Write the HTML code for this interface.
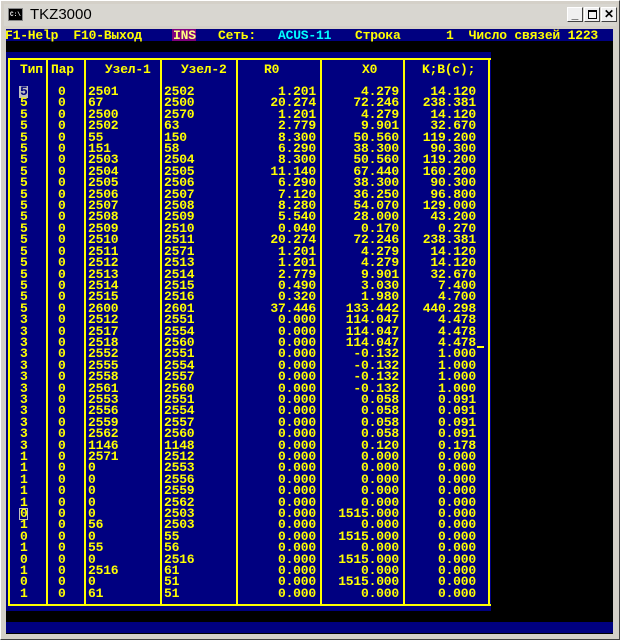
<!DOCTYPE html>
<html><head><meta charset="utf-8"><style>
*{margin:0;padding:0;box-sizing:border-box}
body{width:620px;height:640px;background:#d4d0c8;position:relative;overflow:hidden;font-family:"Liberation Mono","DejaVu Sans Mono",monospace}
.a{position:absolute}
.t{position:absolute;font-weight:bold;font-size:13px;letter-spacing:-0.2px;line-height:11.4px;color:#ffff00;white-space:pre}
.v{position:absolute;top:58px;width:2px;background:#ffff00;height:548px}
.h{position:absolute;height:2px;background:#ffff00;left:8px;width:483px}
.r{text-align:right}
.btn{position:absolute;top:7px;width:16px;height:15px;background:#f0f0f0;border:1px solid #fff;border-right-color:#404040;border-bottom-color:#404040;font:bold 12px "Liberation Sans",sans-serif;text-align:center;line-height:13px;color:#000}
</style></head><body>
<div class="a" style="left:0;top:0;width:620px;height:640px;border:1px solid #fff;border-right-color:#404040;border-bottom-color:#404040"></div>
<div class="a" style="left:4px;top:4px;width:612px;height:22px;background:#d8d6d0"></div>
<div class="a" style="left:8px;top:8px;width:15px;height:13px;background:#000;border:1px solid #888"><div class="a" style="left:1px;top:2px;font:bold 6px 'Liberation Mono',monospace;color:#fff">C:\</div></div>
<div class="a" style="left:30px;top:6px;font:15px 'Liberation Sans',sans-serif;color:#000">TKZ3000</div>
<div class="btn" style="left:567px">_</div>
<div class="btn" style="left:584px"><div class="a" style="left:3px;top:2px;width:9px;height:9px;border:1px solid #000;border-top-width:2px"></div></div>
<div class="btn" style="left:601px">✕</div>

<div class="a" style="left:6px;top:29px;width:607px;height:605px;background:#000"></div>
<div class="a" style="left:6px;top:29px;width:607px;height:12px;background:#000080"></div>
<div class="a" style="left:6px;top:52px;width:485px;height:559px;background:#000080"></div>
<div class="a" style="left:6px;top:622px;width:607px;height:11px;background:#000080"></div>
<div class="a" style="left:172px;top:29px;width:24px;height:12px;background:#800080"></div>

<div class="t" style="left:5px;top:30px">F1-Help  F10-Выход</div>
<div class="t" style="left:173px;top:30px;color:#ffff80">INS</div>
<div class="t" style="left:218px;top:30px">Сеть:</div>
<div class="t" style="left:278px;top:30px;color:#00ffff">ACUS-11</div>
<div class="t" style="left:355px;top:30px">Строка</div>
<div class="t" style="left:446px;top:30px">1  Число связей 1223</div>

<div class="h" style="top:58px"></div>
<div class="h" style="top:604px"></div>
<div class="v" style="left:8px"></div>
<div class="v" style="left:46px"></div>
<div class="v" style="left:84px"></div>
<div class="v" style="left:160px"></div>
<div class="v" style="left:236px"></div>
<div class="v" style="left:320px"></div>
<div class="v" style="left:403px"></div>
<div class="v" style="left:488px"></div>

<div class="t" style="left:20px;top:64px">Тип</div>
<div class="t" style="left:51px;top:64px">Пар</div>
<div class="t" style="left:105px;top:64px">Узел-1</div>
<div class="t" style="left:181px;top:64px">Узел-2</div>
<div class="t" style="left:264px;top:64px">R0</div>
<div class="t" style="left:362px;top:64px">X0</div>
<div class="t" style="left:422px;top:64px">K;B(c);</div>

<div class="a" style="left:19px;top:86px;width:9px;height:12px;background:#c0c0c0"></div>
<div class="a" style="left:19px;top:508px;width:9px;height:12px;border:1px solid #c0c0c0"></div>
<div class="a" style="left:477px;top:346px;width:7px;height:2px;background:#ffff00"></div>

<div class="t" style="left:20px;top:86px"><span style="color:#000080">5</span>
5
5
5
5
5
5
5
5
5
5
5
5
5
5
5
5
5
5
5
3
3
3
3
3
3
3
3
3
3
3
3
1
1
1
1
1
0
1
0
1
0
1
0
1</div>
<div class="t" style="left:58px;top:86px">0
0
0
0
0
0
0
0
0
0
0
0
0
0
0
0
0
0
0
0
0
0
0
0
0
0
0
0
0
0
0
0
0
0
0
0
0
0
0
0
0
0
0
0
0</div>
<div class="t" style="left:88px;top:86px">2501
67
2500
2502
55
151
2503
2504
2505
2506
2507
2508
2509
2510
2511
2512
2513
2514
2515
2600
2512
2517
2518
2552
2555
2558
2561
2553
2556
2559
2562
1146
2571
0
0
0
0
0
56
0
55
0
2516
0
61</div>
<div class="t" style="left:164px;top:86px">2502
2500
2570
63
150
58
2504
2505
2506
2507
2508
2509
2510
2511
2571
2513
2514
2515
2516
2601
2551
2554
2560
2551
2554
2557
2560
2551
2554
2557
2560
1148
2512
2553
2556
2559
2562
2503
2503
55
56
2516
61
51
51</div>
<div class="t r" style="right:304px;top:86px">1.201
20.274
1.201
2.779
8.300
6.290
8.300
11.140
6.290
7.120
8.280
5.540
0.040
20.274
1.201
1.201
2.779
0.490
0.320
37.446
0.000
0.000
0.000
0.000
0.000
0.000
0.000
0.000
0.000
0.000
0.000
0.000
0.000
0.000
0.000
0.000
0.000
0.000
0.000
0.000
0.000
0.000
0.000
0.000
0.000</div>
<div class="t r" style="right:221px;top:86px">4.279
72.246
4.279
9.901
50.560
38.300
50.560
67.440
38.300
36.250
54.070
28.000
0.170
72.246
4.279
4.279
9.901
3.030
1.980
133.442
114.047
114.047
114.047
-0.132
-0.132
-0.132
-0.132
0.058
0.058
0.058
0.058
0.120
0.000
0.000
0.000
0.000
0.000
1515.000
0.000
1515.000
0.000
1515.000
0.000
1515.000
0.000</div>
<div class="t r" style="right:144px;top:86px">14.120
238.381
14.120
32.670
119.200
90.300
119.200
160.200
90.300
96.800
129.000
43.200
0.270
238.381
14.120
14.120
32.670
7.400
4.700
440.298
4.478
4.478
4.478
1.000
1.000
1.000
1.000
0.091
0.091
0.091
0.091
0.178
0.000
0.000
0.000
0.000
0.000
0.000
0.000
0.000
0.000
0.000
0.000
0.000
0.000</div>
</body></html>
